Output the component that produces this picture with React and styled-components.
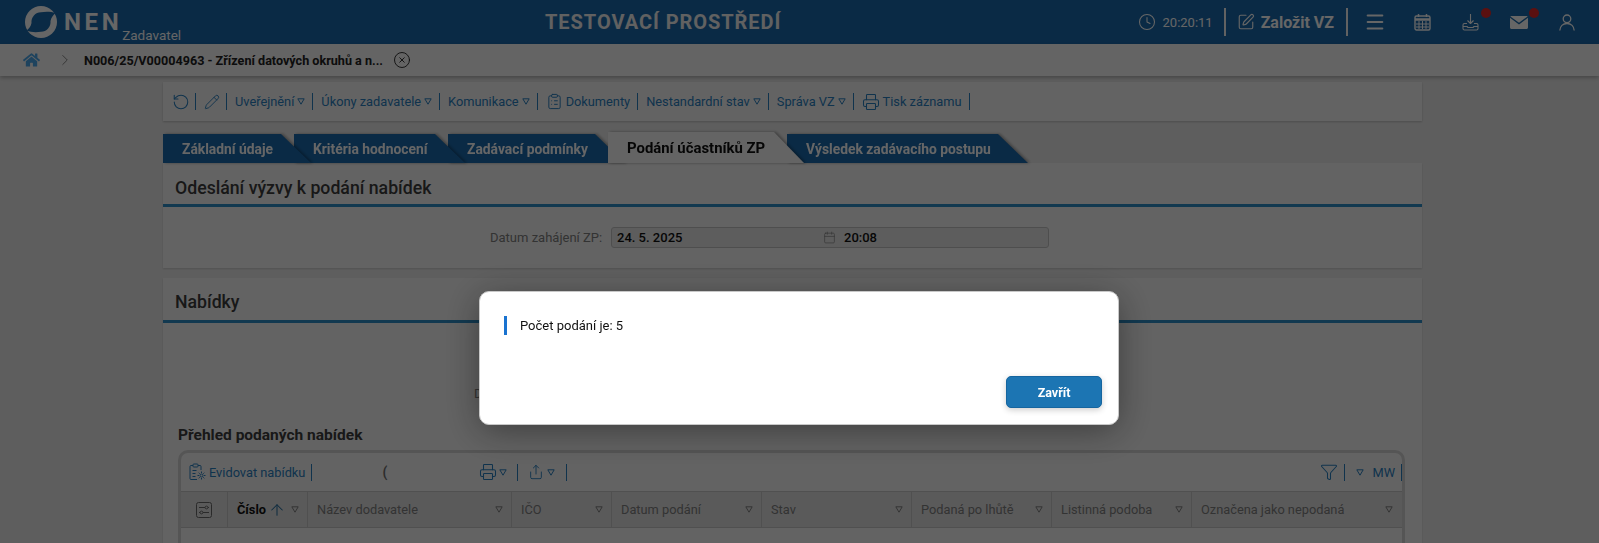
import React from 'react';
import styled, { createGlobalStyle } from 'styled-components';
import { Clock, SquarePen, Menu, CircleX, ChevronRight, Pencil, ClipboardList, Printer, Share, Funnel, RotateCcw, ArrowUp, Calendar } from 'lucide-react';
import { FaHome } from 'react-icons/fa';

const GlobalStyle = createGlobalStyle`
  html, body {
    margin: 0;
    padding: 0;
    height: 100%;
    overflow: hidden;
    background: #ececec;
    font-family: Roboto, 'Liberation Sans', sans-serif;
  }
  * { box-sizing: border-box; }
`;

const Page = styled.div`
  width: 1599px;
  height: 543px;
  overflow: hidden;
  position: relative;
  background: #ececec;
`;

const Header = styled.header`
  height: 44px;
  background: #1a6aad;
  display: flex;
  align-items: center;
  padding: 0 24px 0 25px;
  color: #fff;
`;

const Logo = styled.div`
  display: flex;
  align-items: flex-start;
  width: 520px;
  height: 44px;
  padding-top: 6px;
`;

const LogoName = styled.span`
  font-size: 24px;
  font-weight: 700;
  letter-spacing: 3.6px;
  margin-left: 7px;
  line-height: 32px;
`;

const LogoRole = styled.span`
  font-size: 13.5px;
  font-weight: 400;
  margin: 21px 0 0 0;
  line-height: 16px;
`;

const EnvTitle = styled.div`
  font-size: 20px;
  font-weight: 700;
  letter-spacing: .95px;
  color: #f2f2f2;
`;

const HeaderRight = styled.div`
  margin-left: auto;
  display: flex;
  align-items: center;
`;

const Time = styled.span`
  font-size: 13px;
  margin-left: 7px;
`;

const HeaderSep = styled.span`
  width: 2px;
  height: 28px;
  background: #f4f4f4;
  margin: 0 ${p => p.$right}px 0 ${p => p.$left}px;
`;

const CreateLabel = styled.span`
  font-size: 16px;
  font-weight: 700;
  margin-left: 6px;
`;

const HeaderIcon = styled.span`
  position: relative;
  display: flex;
  width: 17px;
  height: 20px;
  align-items: center;
  justify-content: center;
  margin-left: ${p => p.$gap}px;
  svg { flex: none; }
`;

const Badge = styled.span`
  position: absolute;
  top: -4px;
  right: -12px;
  width: 10px;
  height: 10px;
  border-radius: 50%;
  background: #e02828;
`;

const Breadcrumb = styled.nav`
  height: 32px;
  background: #f9f9f9;
  display: flex;
  align-items: center;
  padding-left: 23px;
  box-shadow: 0 2px 4px rgba(0, 0, 0, .25);
  position: relative;
  color: #222;
`;

const HomeIcon = styled(FaHome)`
  color: #4ca8ec;
  width: 17px;
  height: 16px;
`;

const CrumbChevron = styled(ChevronRight)`
  margin-left: 16px;
  color: #666;
`;

const Crumb = styled.span`
  font-size: 12.6px;
  font-weight: 700;
  margin: 0 10px 0 10px;
`;

const Content = styled.main`
  width: 1259px;
  margin-left: 163px;
  padding-top: 6px;
`;

const ActionBar = styled.div`
  height: 39px;
  background: #f8f8f8;
  box-shadow: 0 1px 2px rgba(0, 0, 0, .2);
  display: flex;
  align-items: center;
  padding-left: 1px;
`;

const ToolItem = styled.div`
  display: flex;
  align-items: center;
  gap: ${p => p.$gap ?? 3}px;
  height: 17px;
  padding: 0 ${p => p.$right ?? 7}px 0 ${p => p.$left ?? 8}px;
  border-right: 1px solid #2a80c0;
  font-size: 12.8px;
  color: #2a80c0;
  white-space: nowrap;
`;

const Tri = styled.svg`
  width: 8px;
  height: 7px;
  flex: none;
  color: ${p => (p.$muted ? '#808080' : 'inherit')};
`;

const TabRow = styled.div`
  display: flex;
  align-items: flex-end;
  height: 31px;
  margin-top: 11px;
`;

const TabShadow = styled.div`
  position: relative;
  width: ${p => p.$width}px;
  height: ${p => (p.$active ? 31 : 29)}px;
  margin-right: -17px;
  z-index: ${p => p.$z};
  filter: drop-shadow(2px 0 1.5px rgba(0, 0, 0, .35));
`;

const TabFace = styled.div`
  height: 100%;
  padding: ${p => (p.$active ? 7 : 6)}px 0 0 19px;
  clip-path: polygon(0 0, calc(100% - 30px) 0, 100% 100%, 0 100%);
  background: ${p => (p.$active ? '#f9f9f9' : '#1a6aad')};
  color: ${p => (p.$active ? '#111' : '#fff')};
  font-size: ${p => (p.$active ? 14.9 : 13.85)}px;
  font-weight: 700;
  line-height: 19px;
  white-space: nowrap;
`;

const Section = styled.section`
  background: #f8f8f8;
  box-shadow: 0 1px 2px rgba(0, 0, 0, .15);
  margin-bottom: ${p => p.$mb || 0}px;
  height: ${p => p.$height}px;
`;

const SectionTitle = styled.h2`
  margin: 0;
  height: ${p => p.$height}px;
  padding: ${p => p.$top}px 0 0 12px;
  font-size: 17.7px;
  font-weight: 500;
  line-height: 24px;
  color: #3c3c3c;
  border-bottom: 3px solid #2f8fc8;
`;

const FieldRow = styled.div`
  display: flex;
  align-items: center;
  margin: ${p => p.$top}px 0 0 ${p => p.$left}px;
  height: 21px;
`;

const FieldLabel = styled.span`
  font-size: 13px;
  color: #808080;
  width: 121px;
  white-space: nowrap;
`;

const DateBox = styled.div`
  width: 438px;
  height: 21px;
  display: flex;
  align-items: center;
  padding-left: 5px;
  border: 1px solid #c4c4c4;
  border-radius: 3px;
  background: #e8e8e8;
  font-size: 13px;
  font-weight: 500;
  color: #111;
`;

const DateValue = styled.span`
  width: 206px;
`;

const CalendarIcon = styled(Calendar)`
  width: 13px;
  height: 13px;
  margin-right: 8px;
  color: #808080;
`;

const SubTitle = styled.h3`
  margin: 0;
  padding: 21px 0 5px 15px;
  font-size: 15.5px;
  font-weight: 700;
  line-height: 20px;
  color: #3c3c3c;
`;

const GridCard = styled.div`
  margin: 0 17px 0 15px;
  border: 3px solid #d4d4d4;
  border-bottom: 0;
  border-radius: 10px 10px 0 0;
  height: 140px;
`;

const GridBar = styled.div`
  height: 38px;
  display: flex;
  align-items: center;
`;

const Spinner = styled.span`
  font-size: 14px;
  font-weight: 700;
  color: #707070;
  width: 159px;
  padding-left: 70px;
`;

const GridBarRight = styled.div`
  margin-left: auto;
  display: flex;
  align-items: center;
`;

const HeadRow = styled.div`
  display: flex;
  height: 37px;
  background: #e2e2e2;
  border-top: 1px solid #c8c8c8;
  border-bottom: 1px solid #c8c8c8;
`;

const HeadCell = styled.div`
  width: ${p => p.$width}px;
  flex: none;
  display: flex;
  align-items: center;
  justify-content: space-between;
  padding: 0 8px 0 9px;
  border-right: 1px solid #c8c8c8;
  font-size: 12.8px;
  font-weight: ${p => (p.$sorted ? 700 : 400)};
  color: ${p => (p.$sorted ? '#111' : '#808080')};
  white-space: nowrap;
  &:last-child { border-right: 0; }
`;

const SortName = styled.span`
  display: flex;
  align-items: center;
  gap: 2px;
`;

const SortArrow = styled(ArrowUp)`
  color: #2a70a0;
`;

const SettingsCell = styled.div`
  width: 47px;
  flex: none;
  display: flex;
  align-items: center;
  justify-content: center;
  border-right: 1px solid #c8c8c8;
  color: #6a6a6a;
`;

const Overlay = styled.div`
  position: fixed;
  inset: 0;
  background: rgba(0, 0, 0, .6);
  z-index: 10;
`;

const Dialog = styled.div`
  position: absolute;
  left: 479px;
  top: 291px;
  width: 640px;
  height: 134px;
  background: #fff;
  border: 1px solid #c8c8c8;
  border-radius: 10px;
  box-shadow: 0 6px 36px rgba(0, 0, 0, .4);
  padding: 24px 16px 16px 24px;
  display: flex;
  flex-direction: column;
`;

const Message = styled.div`
  height: 19px;
  border-left: 3px solid #1a73d0;
  padding-left: 13px;
  font-size: 13px;
  line-height: 19px;
  color: #111;
`;

const CloseButton = styled.button`
  margin-top: auto;
  align-self: flex-end;
  width: 96px;
  height: 32px;
  border: 1px solid #15659f;
  border-radius: 5px;
  background: #1c75b3;
  color: #fff;
  font-family: inherit;
  font-size: 12.5px;
  font-weight: 700;
  box-shadow: 0 2px 6px rgba(0, 0, 0, .2);
`;

const Triangle = ({ muted }) => (
  <Tri viewBox="0 0 8 7" fill="none" $muted={muted}>
    <path d="M.8.8h6.4L4 6.2z" stroke="currentColor" strokeWidth="1" strokeLinejoin="round" />
  </Tri>
);

const LogoMark = () => (
  <svg width="32" height="32" viewBox="0 0 32 32">
    <circle cx="16" cy="16" r="16" fill="#fff" />
    <path d="M30.500 7C26 5.500 20 5.500 16 6.300A9.700 9.700 0 0 0 6.500 17C6 20 4 23 1.500 24.500c4.500 2 10.500 2 14.500 1.200A9.700 9.700 0 0 0 25.500 15c.5-3 2.500-6 5-8z" fill="#1a6aad" />
  </svg>
);

const CalendarGrid = () => (
  <svg width="17" height="18" viewBox="0 0 17 18" fill="none" stroke="currentColor">
    <rect x="1" y="3" width="15" height="14" rx="1.500" strokeWidth="1.400" />
    <path d="M1 6.500h15" strokeWidth="2.500" />
    <path d="M4.500 1v3M12.500 1v3" strokeWidth="1.500" />
    <path d="M5 8v8M8.500 8v8M12 8v8M2 11h13M2 14h13" strokeWidth="1" />
  </svg>
);

const InboxDown = () => (
  <svg width="17" height="18" viewBox="0 0 17 18" fill="none" stroke="currentColor" strokeWidth="1.100" strokeLinejoin="round">
    <path d="M8.500 1v9M5.500 7.500l3 3 3-3" />
    <path d="M5 10.500H2.500A1.500 1.500 0 0 0 1 12v3.500A1.500 1.500 0 0 0 2.500 17h12a1.500 1.500 0 0 0 1.500-1.500V12a1.500 1.500 0 0 0-1.500-1.500H12M1 13.500h4l1 1h5l1-1h4" />
  </svg>
);

const MailFilled = () => (
  <svg width="18" height="13" viewBox="0 0 18 13">
    <path d="M1.500 0h15c.4 0 .8.1 1.100.4L9 6.800.4.400C.700.100 1.100 0 1.500 0z" fill="currentColor" />
    <path d="M0 1.800l9 6.700 9-6.700v9.700c0 .8-.7 1.500-1.500 1.500h-15C.7 13 0 12.300 0 11.500z" fill="currentColor" />
  </svg>
);

const UserOutline = () => (
  <svg width="16" height="17" viewBox="0 0 16 17" fill="none" stroke="currentColor" strokeWidth="1.300">
    <circle cx="8" cy="4.800" r="3.800" />
    <path d="M.8 16.500c.3-4 3-7 7.200-7s6.900 3 7.200 7" />
  </svg>
);

const ClipboardCog = () => (
  <svg width="17" height="18" viewBox="0 0 17 18" fill="none" stroke="currentColor" strokeWidth="1">
    <path d="M8 16.500H2a1 1 0 0 1-1-1V3.500a1 1 0 0 1 1-1h2M9 2.500h2a1 1 0 0 1 1 1V7" />
    <rect x="4" y="1" width="5" height="3" rx=".8" />
    <path d="M3.500 7.500h4M3.500 10.500h3M3.500 13.500h3" />
    <circle cx="12.500" cy="12.500" r="1.500" />
    <path d="M12.500 8.500v1.500M12.500 15v1.500M8.500 12.500H10M15 12.500h1.500M9.700 9.700l1 1M14.300 14.300l1 1M9.700 15.300l1-1M14.300 10.700l1-1" />
  </svg>
);

const SettingsBox = () => (
  <svg width="16" height="16" viewBox="0 0 16 16" fill="none" stroke="currentColor" strokeWidth="1">
    <rect x=".5" y=".5" width="15" height="15" rx="2" />
    <path d="M3 5.500h6M12 5.500h1M3 10.500h1M7 10.500h6" />
    <circle cx="10.500" cy="5.500" r="1.400" />
    <circle cx="5.500" cy="10.500" r="1.400" />
  </svg>
);

const tabs = [
  { label: 'Základní údaje', width: 148, z: 5 },
  { label: 'Kritéria hodnocení', width: 171, z: 4 },
  { label: 'Zadávací podmínky', width: 177, z: 3 },
  { label: 'Podání účastníků ZP', width: 196, z: 6, active: true },
  { label: 'Výsledek zadávacího postupu', width: 241, z: 1 },
];

const columns = [
  { label: 'Název dodavatele', width: 204 },
  { label: 'IČO', width: 100 },
  { label: 'Datum podání', width: 150 },
  { label: 'Stav', width: 150 },
  { label: 'Podaná po lhůtě', width: 140 },
  { label: 'Listinná podoba', width: 140 },
  { label: 'Označena jako nepodaná', width: 209 },
];

export default function App() {
  return (
    <Page>
      <GlobalStyle />
      <Header>
        <Logo>
          <LogoMark />
          <LogoName>NEN</LogoName>
          <LogoRole>Zadavatel</LogoRole>
        </Logo>
        <EnvTitle>TESTOVACÍ PROSTŘEDÍ</EnvTitle>
        <HeaderRight>
          <Clock size={18} strokeWidth={1.4} />
          <Time>20:20:11</Time>
          <HeaderSep $left={11} $right={11} />
          <SquarePen size={18} strokeWidth={1.5} />
          <CreateLabel>Založit VZ</CreateLabel>
          <HeaderSep $left={12} $right={10} />
          <HeaderIcon $gap={8}><Menu size={22} strokeWidth={2.2} /></HeaderIcon>
          <HeaderIcon $gap={31}><CalendarGrid /></HeaderIcon>
          <HeaderIcon $gap={31}><InboxDown /><Badge /></HeaderIcon>
          <HeaderIcon $gap={31}><MailFilled /><Badge /></HeaderIcon>
          <HeaderIcon $gap={31}><UserOutline /></HeaderIcon>
        </HeaderRight>
      </Header>

      <Breadcrumb>
        <HomeIcon />
        <CrumbChevron size={18} strokeWidth={1} />
        <Crumb>N006/25/V00004963 - Zřízení datových okruhů a n...</Crumb>
        <CircleX size={18} strokeWidth={1.2} />
      </Breadcrumb>

      <Content>
        <ActionBar>
          <ToolItem $right={5}><RotateCcw size={18} strokeWidth={1.4} /></ToolItem>
          <ToolItem $right={6}><Pencil size={16} strokeWidth={1.4} /></ToolItem>
          <ToolItem>Uveřejnění <Triangle /></ToolItem>
          <ToolItem>Úkony zadavatele <Triangle /></ToolItem>
          <ToolItem>Komunikace <Triangle /></ToolItem>
          <ToolItem><ClipboardList size={17} strokeWidth={1.4} />Dokumenty</ToolItem>
          <ToolItem>Nestandardní stav <Triangle /></ToolItem>
          <ToolItem>Správa VZ <Triangle /></ToolItem>
          <ToolItem><Printer size={18} strokeWidth={1.4} />Tisk záznamu</ToolItem>
        </ActionBar>

        <TabRow>
          {tabs.map(tab => (
            <TabShadow key={tab.label} $width={tab.width} $z={tab.z} $active={tab.active}>
              <TabFace $active={tab.active}>{tab.label}</TabFace>
            </TabShadow>
          ))}
        </TabRow>

        <Section $height={105} $mb={10}>
          <SectionTitle $height={44} $top={13}>Odeslání výzvy k podání nabídek</SectionTitle>
          <FieldRow $top={20} $left={327}>
            <FieldLabel>Datum zahájení ZP:</FieldLabel>
            <DateBox>
              <DateValue>24. 5. 2025</DateValue>
              <CalendarIcon strokeWidth={1.2} />
              20:08
            </DateBox>
          </FieldRow>
        </Section>

        <Section $height={300}>
          <SectionTitle $height={45} $top={12}>Nabídky</SectionTitle>
          <FieldRow $top={60} $left={311}>
            <FieldLabel>Datum otevírání:</FieldLabel>
          </FieldRow>
          <SubTitle>Přehled podaných nabídek</SubTitle>
          <GridCard>
            <GridBar>
              <ToolItem $right={6}><ClipboardCog />Evidovat nabídku</ToolItem>
              <Spinner>(</Spinner>
              <ToolItem $right={10} $gap={2}><Printer size={18} strokeWidth={1.4} /><Triangle /></ToolItem>
              <ToolItem $left={10} $right={11}><Share size={16} strokeWidth={1.4} /><Triangle /></ToolItem>
              <GridBarRight>
                <ToolItem $right={6}><Funnel size={18} strokeWidth={1.4} /></ToolItem>
                <ToolItem $left={11} $right={6} $gap={8}><Triangle />MW</ToolItem>
              </GridBarRight>
            </GridBar>
            <HeadRow>
              <SettingsCell><SettingsBox /></SettingsCell>
              <HeadCell $width={80} $sorted>
                <SortName>Číslo <SortArrow size={18} strokeWidth={1.4} /></SortName>
                <Triangle muted />
              </HeadCell>
              {columns.map(col => (
                <HeadCell key={col.label} $width={col.width}>{col.label} <Triangle /></HeadCell>
              ))}
            </HeadRow>
          </GridCard>
        </Section>
      </Content>

      <Overlay>
        <Dialog>
          <Message>Počet podání je: 5</Message>
          <CloseButton>Zavřít</CloseButton>
        </Dialog>
      </Overlay>
    </Page>
  );
}
